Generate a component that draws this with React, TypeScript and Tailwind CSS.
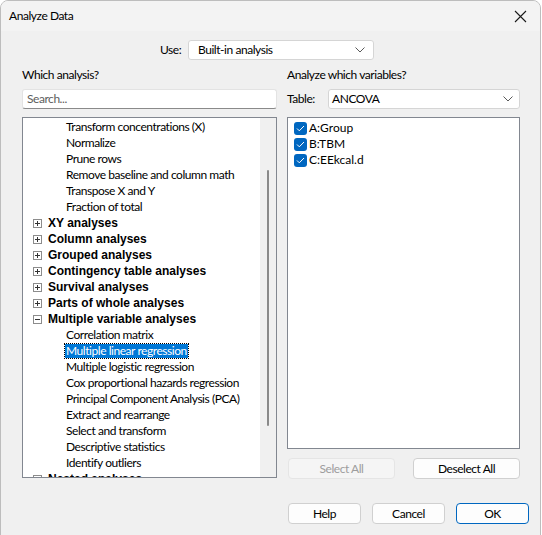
import React from "react";

const font = { fontFamily: "Lato, 'Liberation Sans', Arial, sans-serif" };
const boldFont = { fontFamily: "'Liberation Sans', Arial, sans-serif" };

function Chevron() {
  return (
    <svg width="10" height="6" viewBox="0 0 10 6" className="shrink-0">
      <path d="M0.5 0.5 L5 5 L9.5 0.5" fill="none" stroke="#5a5a5a" strokeWidth="1" />
    </svg>
  );
}

function Box({ open }: { open: boolean }) {
  return (
    <svg width="9" height="9" viewBox="0 0 9 9" className="shrink-0">
      <rect x="0.5" y="0.5" width="8" height="8" fill="#fff" stroke="#8c8c8c" />
      <line x1="2" y1="4.5" x2="7" y2="4.5" stroke="#333" />
      {!open && <line x1="4.5" y1="2" x2="4.5" y2="7" stroke="#333" />}
    </svg>
  );
}

function Check() {
  return (
    <div className="w-[13px] h-[13px] rounded-[3px] bg-[#0067c0] flex items-center justify-center shrink-0">
      <svg width="9" height="7" viewBox="0 0 9 7">
        <path d="M1 3.5 L3.3 5.8 L8 1" fill="none" stroke="#fff" strokeWidth="1" />
      </svg>
    </div>
  );
}

type Row = { t: string; kind: "child" | "group" | "open"; sel?: boolean };

const rows: Row[] = [
  { t: "Transform concentrations (X)", kind: "child" },
  { t: "Normalize", kind: "child" },
  { t: "Prune rows", kind: "child" },
  { t: "Remove baseline and column math", kind: "child" },
  { t: "Transpose X and Y", kind: "child" },
  { t: "Fraction of total", kind: "child" },
  { t: "XY analyses", kind: "group" },
  { t: "Column analyses", kind: "group" },
  { t: "Grouped analyses", kind: "group" },
  { t: "Contingency table analyses", kind: "group" },
  { t: "Survival analyses", kind: "group" },
  { t: "Parts of whole analyses", kind: "group" },
  { t: "Multiple variable analyses", kind: "open" },
  { t: "Correlation matrix", kind: "child" },
  { t: "Multiple linear regression", kind: "child", sel: true },
  { t: "Multiple logistic regression", kind: "child" },
  { t: "Cox proportional hazards regression", kind: "child" },
  { t: "Principal Component Analysis (PCA)", kind: "child" },
  { t: "Extract and rearrange", kind: "child" },
  { t: "Select and transform", kind: "child" },
  { t: "Descriptive statistics", kind: "child" },
  { t: "Identify outliers", kind: "child" },
  { t: "Nested analyses", kind: "group" },
];

function Btn({ children, disabled, primary, w }: { children: React.ReactNode; disabled?: boolean; primary?: boolean; w: string }) {
  const base = "h-[21px] rounded-[4px] flex items-center justify-center text-[12px] border ";
  const cls = disabled
    ? "bg-[#f5f5f5] border-[#e5e5e5] text-[#9d9d9d]"
    : primary
    ? "bg-[#fdfdfd] border-[#0067c0] text-black"
    : "bg-[#fdfdfd] border-[#d0d0d0] text-black";
  return <div className={base + cls + " " + w}>{children}</div>;
}

export default function App() {
  return (
    <div className="w-[542px] h-[535px] bg-white overflow-hidden text-black tracking-[-0.45px]" style={font}>
      <div className="w-[541px] h-[536px] rounded-t-[8px] border border-[#bdbdbd] bg-[#f0f0f0] flex flex-col overflow-hidden">
        <div className="h-[30px] bg-[#f3f3f3] flex items-center justify-between pl-[8px] pr-[13px] shrink-0">
          <span className="text-[12px]">Analyze Data</span>
          <svg width="13" height="13" viewBox="0 0 13 13">
            <path d="M1 1 L12 12 M12 1 L1 12" stroke="#1a1a1a" strokeWidth="1.1" />
          </svg>
        </div>
        <div className="flex-1 flex flex-col text-[12px]">
          <div className="flex items-center pl-[159px] mt-[9px] h-[20px]">
            <span className="w-[28px]">Use:</span>
            <div className="w-[186px] h-[20px] bg-white border border-[#d5d5d5] rounded-[3px] flex items-center justify-between pl-[9px] pr-[8px]">
              <span>Built-in analysis</span>
              <Chevron />
            </div>
          </div>
          <div className="flex mt-[8px] pl-[21px]">
            <div className="w-[255px] flex flex-col">
              <div className="h-[14px] leading-[14px]">Which analysis?</div>
              <div className="mt-[7px] h-[20px] bg-white border border-[#e3e3e3] border-b-[#8a8a8a] rounded-[3px] flex items-center pl-[4px] text-[#5d5d5d]">
                Search...
              </div>
              <div className="mt-[8px] h-[361px] bg-white border border-[#828790] flex overflow-hidden">
                <div className="flex-1 pt-[1px] overflow-hidden">
                  {rows.map((r, i) =>
                    r.kind === "child" ? (
                      <div key={i} className="h-[16px] flex items-center pl-[42px]">
                        <span
                          className={
                            "px-[1px] leading-[14px] whitespace-nowrap " +
                            (r.sel ? "bg-[#0078d7] text-white outline outline-1 outline-dotted outline-[#000]" : "")
                          }
                        >
                          {r.t}
                        </span>
                      </div>
                    ) : (
                      <div key={i} className="h-[16px] flex items-center pl-[10px] gap-[6px]">
                        <Box open={r.kind === "open"} />
                        <span className="font-bold whitespace-nowrap tracking-normal" style={boldFont}>
                          {r.t}
                        </span>
                      </div>
                    )
                  )}
                </div>
                <div className="w-[16px] bg-[#f0f0f0] shrink-0 flex justify-center">
                  <div className="w-[2px] h-[256px] mt-[52px] bg-[#8a8a8a] rounded-full" />
                </div>
              </div>
            </div>
            <div className="w-[233px] ml-[10px] flex flex-col">
              <div className="h-[14px] leading-[14px]">Analyze which variables?</div>
              <div className="mt-[7px] flex items-center h-[20px]">
                <span className="w-[41px]">Table:</span>
                <div className="flex-1 h-[20px] bg-white border border-[#d5d5d5] rounded-[3px] flex items-center justify-between pl-[3px] pr-[6px]">
                  <span>ANCOVA</span>
                  <Chevron />
                </div>
              </div>
              <div className="mt-[8px] h-[332px] bg-white border border-[#828790] pt-[2px] pl-[6px]">
                {["A:Group", "B:TBM", "C:EEkcal.d"].map((v) => (
                  <div key={v} className="h-[16px] flex items-center gap-[2px]">
                    <Check />
                    <span className="tracking-normal">{v}</span>
                  </div>
                ))}
              </div>
              <div className="mt-[9px] flex justify-between pl-[1px]">
                <Btn disabled w="w-[107px]">Select All</Btn>
                <Btn w="w-[107px]">Deselect All</Btn>
              </div>
            </div>
          </div>
          <div className="mt-auto mb-[11px] flex gap-[11px] pl-[287px]">
            <Btn w="w-[73px]">Help</Btn>
            <Btn w="w-[73px]">Cancel</Btn>
            <Btn primary w="w-[73px]">OK</Btn>
          </div>
        </div>
      </div>
    </div>
  );
}
